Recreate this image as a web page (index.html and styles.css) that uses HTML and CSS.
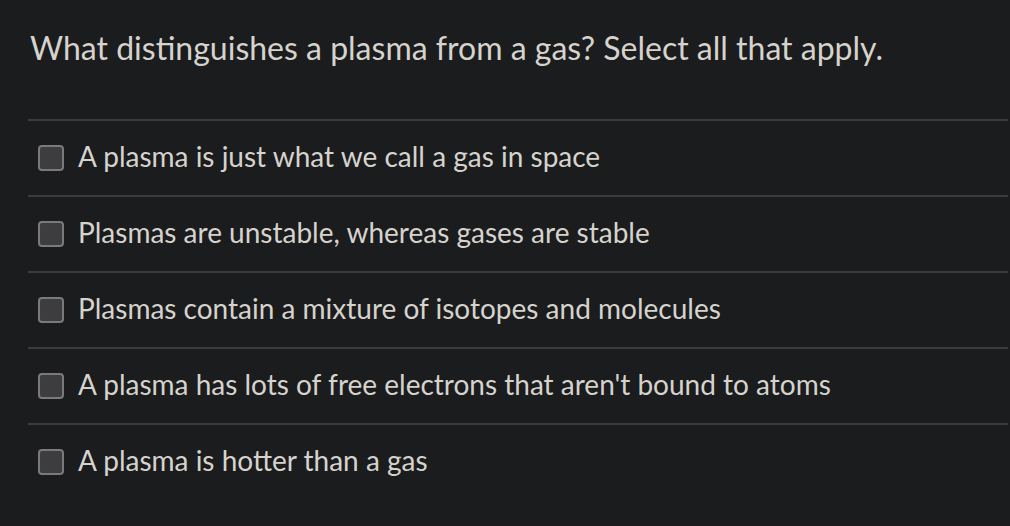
FILE: index.html
```html
<!DOCTYPE html>
<html lang="en">
<head>
  <meta charset="UTF-8">
  <meta name="viewport" content="width=device-width, initial-scale=1.0">
  <title>Question</title>
  <link rel="stylesheet" href="styles.css">
</head>
<body>
  <div class="question">
    <h1 class="prompt">What distinguishes a plasma from a gas? Select all that apply.</h1>

    <ul class="answers">
      <li class="answer"><span class="box"></span><span class="label">A plasma is just what we call a gas in space</span></li>
      <li class="answer"><span class="box"></span><span class="label">Plasmas are unstable, whereas gases are stable</span></li>
      <li class="answer"><span class="box"></span><span class="label">Plasmas contain a mixture of isotopes and molecules</span></li>
      <li class="answer"><span class="box"></span><span class="label">A plasma has lots of free electrons that aren't bound to atoms</span></li>
      <li class="answer last"><span class="box"></span><span class="label">A plasma is hotter than a gas</span></li>
    </ul>
  </div>
</body>
</html>
```

FILE: styles.css
```css
body {
  font-family: Lato, "Open Sans", sans-serif;
  margin: 0;
  padding: 0;
  background-color: #1b1c1e;
  color: #d6d3cd;
}

.question {
  padding: 0 2px 0 28px;
}

.prompt {
  font-size: 32px;
  font-weight: 400;
  margin: 0;
  padding: 28px 0 0 2px;
  height: 119px;
  box-sizing: border-box;
  line-height: 40px;
}

.answers {
  list-style: none;
  margin: 0;
  padding: 0;
  border-top: 2px solid #3c3d3f;
}

.answer {
  display: flex;
  align-items: center;
  height: 74px;
  border-bottom: 2px solid #3c3d3f;
  font-size: 28px;
  padding-left: 10px;
}

.answer.last {
  border-bottom: none;
}

.box {
  width: 22px;
  height: 22px;
  border: 2px solid #7a7a7a;
  border-radius: 4px;
  background-color: #3d3d3f;
  margin-right: 14px;
  flex-shrink: 0;
}

.label {
  margin-bottom: 5px;
}
```
